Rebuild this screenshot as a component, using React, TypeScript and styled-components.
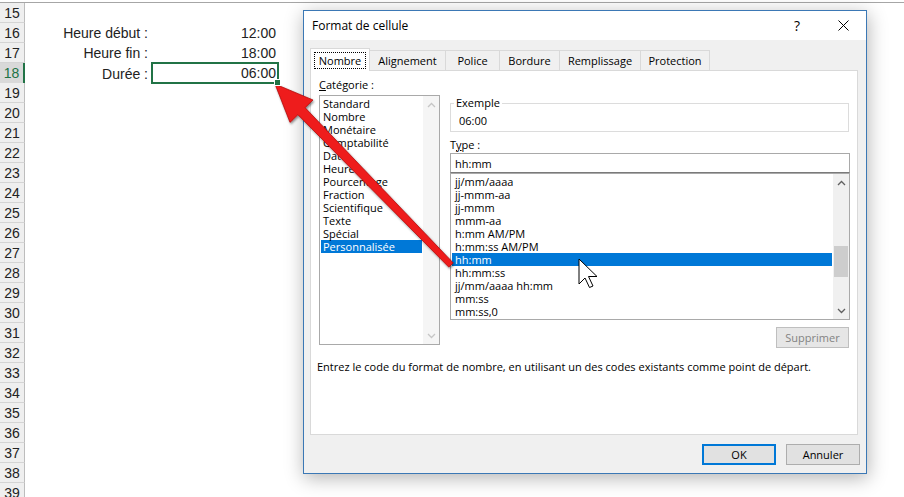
import { FC } from "react";
import styled, { createGlobalStyle, css } from "styled-components";

const GlobalStyle = createGlobalStyle`
  html, body {
    margin: 0;
    padding: 0;
    background: #ffffff;
    overflow: hidden;
  }
  body {
    width: 904px;
    height: 497px;
    position: relative;
  }
`;

const ROWS = Array.from({ length: 25 }, (_, i) => 15 + i);
const ACTIVE_ROW = 18;

const sheetData: Record<number, { label: string; value: string }> = {
  16: { label: "Heure début :", value: "12:00" },
  17: { label: "Heure fin :", value: "18:00" },
  18: { label: "Durée :", value: "06:00" },
};

const categories = [
  "Standard",
  "Nombre",
  "Monétaire",
  "Comptabilité",
  "Date",
  "Heure",
  "Pourcentage",
  "Fraction",
  "Scientifique",
  "Texte",
  "Spécial",
  "Personnalisée",
];

const formats = [
  "jj/mm/aaaa",
  "jj-mmm-aa",
  "jj-mmm",
  "mmm-aa",
  "h:mm AM/PM",
  "h:mm:ss AM/PM",
  "hh:mm",
  "hh:mm:ss",
  "jj/mm/aaaa hh:mm",
  "mm:ss",
  "mm:ss,0",
];

const tabs = [
  { label: "Nombre", width: 60 },
  { label: "Alignement", width: 77 },
  { label: "Police", width: 55 },
  { label: "Bordure", width: 61 },
  { label: "Remplissage", width: 82 },
  { label: "Protection", width: 70 },
];

/* ---------- feuille ---------- */

const Sheet = styled.div`
  margin-top: 2px;
  border-top: 1px solid #a6a6a6;
  font-family: "Liberation Sans", Arial, sans-serif;
  font-size: 14px;
  color: #222;
`;

const SheetRow = styled.div`
  display: grid;
  grid-template-columns: 25px 126px 128px 1fr;
  height: 20px;
`;

const RowHeader = styled.div<{ $active: boolean }>`
  box-sizing: border-box;
  display: flex;
  align-items: center;
  justify-content: center;
  background: ${(p) => (p.$active ? "#d9d9d9" : "#efefef")};
  color: ${(p) => (p.$active ? "#217346" : "#222")};
  border-bottom: 1px solid #d4d4d4;
  border-right: ${(p) => (p.$active ? "2px solid #217346" : "1px solid #bdbdbd")};
`;

const Cell = styled.div<{ $selected?: boolean }>`
  box-sizing: border-box;
  display: flex;
  align-items: center;
  justify-content: flex-end;
  padding-right: 3px;
  white-space: nowrap;

  ${(p) =>
    p.$selected &&
    css`
      position: relative;
      z-index: 1;
      margin-top: -1px;
      height: 22px;
      border: 2px solid #217346;
      padding-right: 1px;

      &::after {
        content: "";
        position: absolute;
        right: -4px;
        bottom: -4px;
        width: 5px;
        height: 5px;
        background: #217346;
        border: 1px solid #fff;
      }
    `}
`;

/* ---------- boîte de dialogue ---------- */

const Window = styled.div`
  position: absolute;
  left: 303px;
  top: 10px;
  width: 564px;
  height: 464px;
  box-sizing: border-box;
  border: 1px solid #3b78b5;
  background: #f0f0f0;
  box-shadow: 1px 4px 18px rgba(0, 0, 0, 0.3);
  display: flex;
  flex-direction: column;
  font-family: "Open Sans", "Noto Sans", sans-serif;
  font-size: 11px;
  color: #000;
`;

const TitleBar = styled.div`
  height: 29px;
  background: #fff;
  display: flex;
  align-items: center;
  padding-left: 8px;
  font-size: 12px;
`;

const Title = styled.div`
  flex: 1;
`;

const TitleButton = styled.div`
  width: 46px;
  height: 29px;
  display: flex;
  align-items: center;
  justify-content: center;
  font-size: 14px;
`;

const Body = styled.div`
  flex: 1;
  padding: 8px 8px 0 6px;
`;

const TabBar = styled.div`
  display: flex;
  align-items: flex-end;
  height: 22px;
  position: relative;
  z-index: 1;
`;

const Tab = styled.div<{ $active?: boolean; $width: number }>`
  box-sizing: border-box;
  display: flex;
  align-items: center;
  justify-content: center;
  width: ${(p) => p.$width}px;
  height: ${(p) => (p.$active ? "23px" : "20px")};
  margin-bottom: ${(p) => (p.$active ? "-1px" : "0")};
  margin-left: -1px;
  border: 1px solid #d9d9d9;
  border-bottom: none;
  background: ${(p) => (p.$active ? "#fff" : "#f0f0f0")};

  &:first-child {
    margin-left: 0;
  }
`;

const FocusRing = styled.span`
  padding: 0 4px;
  line-height: 15px;
  border: 1px dotted #000;
`;

const Panel = styled.div`
  box-sizing: border-box;
  height: 365px;
  background: #fff;
  border: 1px solid #d9d9d9;
  padding: 6px 8px 0 8px;
`;

const Columns = styled.div`
  display: grid;
  grid-template-columns: 121px 400px;
  column-gap: 10px;
  align-items: start;
`;

const Column = styled.div`
  display: flex;
  flex-direction: column;
`;

const FieldLabel = styled.div`
  line-height: 16px;
  white-space: nowrap;
`;

const ListBox = styled.div<{ $height: number; $gap?: number }>`
  box-sizing: border-box;
  height: ${(p) => p.$height}px;
  margin-top: ${(p) => p.$gap ?? 0}px;
  border: 1px solid #a9a9a9;
  background: #fff;
  display: flex;
  overflow: hidden;
`;

const ListItems = styled.div<{ $padTop: number }>`
  flex: 1;
  padding: ${(p) => p.$padTop}px 1px 0 1px;
  min-width: 0;
`;

const ListItem = styled.div<{ $selected?: boolean; $indent: number }>`
  line-height: 13px;
  height: 13px;
  padding-left: ${(p) => p.$indent}px;
  white-space: nowrap;
  background: ${(p) => (p.$selected ? "#0078d7" : "transparent")};
  color: ${(p) => (p.$selected ? "#fff" : "#000")};
`;

const ScrollBar = styled.div<{ $muted?: boolean }>`
  width: 16px;
  display: flex;
  flex-direction: column;
  background: ${(p) => (p.$muted ? "#f5f5f5" : "#f0f0f0")};
  color: ${(p) => (p.$muted ? "#c6c6c6" : "#606060")};
`;

const ScrollButton = styled.div`
  height: 17px;
  display: flex;
  align-items: center;
  justify-content: center;
`;

const ScrollTrack = styled.div`
  flex: 1;
  padding: 0 1px;
`;

const ScrollThumb = styled.div<{ $offset: number; $size: number }>`
  margin-top: ${(p) => p.$offset}px;
  height: ${(p) => p.$size}px;
  background: #cdcdcd;
`;

const GroupBox = styled.fieldset`
  margin: 19px 1px 0 0;
  padding: 4px 8px 3px 8px;
  border: 1px solid #dcdcdc;
  min-width: 0;
`;

const GroupLegend = styled.legend`
  padding: 0 2px;
  margin-left: -5px;
  line-height: 14px;
`;

const GroupValue = styled.div`
  line-height: 14px;
`;

const TypeLabel = styled(FieldLabel)`
  margin-top: 5px;
`;

const TypeInput = styled.div`
  box-sizing: border-box;
  height: 20px;
  border: 1px solid #a9a9a9;
  border-bottom-color: #7a7a7a;
  padding-left: 4px;
  display: flex;
  align-items: center;
`;

const ActionRow = styled.div`
  display: flex;
  justify-content: flex-end;
  margin: 7px 1px 0 0;
`;

const Button = styled.div<{ $primary?: boolean; $disabled?: boolean }>`
  box-sizing: border-box;
  width: ${(p) => (p.$disabled ? "73px" : "74px")};
  height: 21px;
  display: flex;
  align-items: center;
  justify-content: center;
  background: #e1e1e1;
  border: 1px solid #adadad;
  color: #000;

  ${(p) =>
    p.$primary &&
    css`
      border: 2px solid #0078d7;
    `}

  ${(p) =>
    p.$disabled &&
    css`
      background: #e6e6e6;
      border-color: #bfbfbf;
      color: #838383;
    `}
`;

const Description = styled.div`
  margin: 11px 0 0 -2px;
  line-height: 16px;
  white-space: nowrap;
`;

const Footer = styled.div`
  display: flex;
  justify-content: flex-end;
  gap: 10px;
  margin: 9px -2px 0 0;
`;

const Overlay = styled.svg`
  position: absolute;
  left: 0;
  top: 0;
  pointer-events: none;
`;

const Chevron: FC<{ down?: boolean }> = ({ down }) => (
  <svg width="9" height="6" viewBox="0 0 9 6">
    <polyline
      points={down ? "1,1 4.5,4.5 8,1" : "1,5 4.5,1.5 8,5"}
      fill="none"
      stroke="currentColor"
      strokeWidth="1.3"
    />
  </svg>
);

const CloseIcon = () => (
  <svg width="11" height="11" viewBox="0 0 11 11">
    <path d="M0.5 0.5 L10.5 10.5 M10.5 0.5 L0.5 10.5" stroke="#000" strokeWidth="1" />
  </svg>
);

const FormatDialog: FC = () => (
  <Window>
    <TitleBar>
      <Title>Format de cellule</Title>
      <TitleButton>?</TitleButton>
      <TitleButton>
        <CloseIcon />
      </TitleButton>
    </TitleBar>
    <Body>
      <TabBar>
        {tabs.map((t, i) =>
          i === 0 ? (
            <Tab key={t.label} $width={t.width} $active>
              <FocusRing>{t.label}</FocusRing>
            </Tab>
          ) : (
            <Tab key={t.label} $width={t.width}>
              {t.label}
            </Tab>
          )
        )}
      </TabBar>
      <Panel>
        <Columns>
          <Column>
            <FieldLabel>
              <u>C</u>atégorie :
            </FieldLabel>
            <ListBox $height={250} $gap={2}>
              <ListItems $padTop={1}>
                {categories.map((c) => (
                  <ListItem key={c} $indent={2} $selected={c === "Personnalisée"}>
                    {c}
                  </ListItem>
                ))}
              </ListItems>
              <ScrollBar $muted>
                <ScrollButton>
                  <Chevron />
                </ScrollButton>
                <ScrollTrack />
                <ScrollButton>
                  <Chevron down />
                </ScrollButton>
              </ScrollBar>
            </ListBox>
          </Column>
          <Column>
            <GroupBox>
              <GroupLegend>Exemple</GroupLegend>
              <GroupValue>06:00</GroupValue>
            </GroupBox>
            <TypeLabel>
              T<u>y</u>pe :
            </TypeLabel>
            <TypeInput>hh:mm</TypeInput>
            <ListBox $height={147}>
              <ListItems $padTop={1}>
                {formats.map((f) => (
                  <ListItem key={f} $indent={3} $selected={f === "hh:mm"}>
                    {f}
                  </ListItem>
                ))}
              </ListItems>
              <ScrollBar>
                <ScrollButton>
                  <Chevron />
                </ScrollButton>
                <ScrollTrack>
                  <ScrollThumb $offset={55} $size={31} />
                </ScrollTrack>
                <ScrollButton>
                  <Chevron down />
                </ScrollButton>
              </ScrollBar>
            </ListBox>
            <ActionRow>
              <Button $disabled>Supprimer</Button>
            </ActionRow>
          </Column>
        </Columns>
        <Description>
          Entrez le code du format de nombre, en utilisant un des codes existants comme point de départ.
        </Description>
      </Panel>
      <Footer>
        <Button $primary>OK</Button>
        <Button>Annuler</Button>
      </Footer>
    </Body>
  </Window>
);

const Annotations: FC = () => (
  <Overlay width={904} height={497} viewBox="0 0 904 497">
    <defs>
      <filter id="arrowShadow" x="-20%" y="-20%" width="140%" height="140%">
        <feDropShadow dx="1" dy="1.5" stdDeviation="1.2" floodColor="#000" floodOpacity="0.45" />
      </filter>
    </defs>
    <polygon
      points="275,84 313,100 305.1,107.7 453.2,262.9 448.8,267.1 297.9,114.7 290,122.4"
      fill="#ee1b1b"
      stroke="#b30c0c"
      strokeWidth="0.8"
      strokeLinejoin="round"
      filter="url(#arrowShadow)"
    />
    <path
      d="M579 259 L579 284 L585 278 L589.5 287.5 L593 286 L588.5 276.5 L597 276.5 Z"
      fill="#fff"
      stroke="#000"
      strokeWidth="1"
      strokeLinejoin="miter"
    />
  </Overlay>
);

export default function App() {
  return (
    <>
      <GlobalStyle />
      <Sheet>
        {ROWS.map((r) => {
          const data = sheetData[r];
          return (
            <SheetRow key={r}>
              <RowHeader $active={r === ACTIVE_ROW}>{r}</RowHeader>
              <Cell>{data?.label}</Cell>
              <Cell $selected={r === ACTIVE_ROW}>{data?.value}</Cell>
              <div />
            </SheetRow>
          );
        })}
      </Sheet>
      <FormatDialog />
      <Annotations />
    </>
  );
}
